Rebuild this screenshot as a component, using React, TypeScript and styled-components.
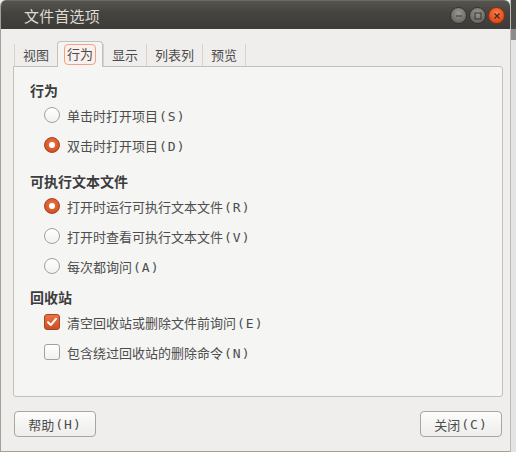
import React from "react";
import styled, { createGlobalStyle, css } from "styled-components";

const Global = createGlobalStyle`
  html, body { margin: 0; padding: 0; background: #ececec; }
  body { width: 516px; height: 452px; overflow: hidden; }
  * { box-sizing: border-box; }
`;

const FONT = `"DejaVu Sans Mono", "Noto Sans CJK SC", sans-serif`;

const Page = styled.div`
  display: flex;
  width: 516px;
  height: 452px;
`;

const Window = styled.div`
  width: 510px;
  height: 452px;
  display: flex;
  flex-direction: column;
  background: #efeeec;
  border-left: 1px solid #a59f95;
  border-bottom: 1px solid #a59f95;
  border-radius: 6px 6px 0 0;
  overflow: hidden;
  font-family: ${FONT};
`;

const Edge = styled.div`
  width: 6px;
  height: 452px;
  background:
    linear-gradient(to right, #bdbab4 0 1px, transparent 1px),
    linear-gradient(to bottom, #4a4945 0 29px, #8c8c8c 29px 40px, #e4e4e2 40px);
`;

const TitleBar = styled.div`
  height: 29px;
  flex: none;
  display: flex;
  align-items: center;
  padding: 0 5px 0 23px;
  background: linear-gradient(to bottom, #55544f 0%, #45443f 40%, #3c3b37 100%);
  border-top: 1px solid #6a6964;
`;

const Title = styled.div`
  flex: 1;
  color: #dfdbd2;
  font-size: 15px;
  font-family: "Noto Sans CJK SC", sans-serif;
  letter-spacing: 0.2px;
  margin-top: 1px;
`;

const WinButtons = styled.div`
  display: flex;
  gap: 2px;
  margin-top: 1px;
`;

const WinButton = styled.div<{ $kind: "min" | "max" | "close" }>`
  width: 17px;
  height: 17px;
  border-radius: 50%;
  display: flex;
  align-items: center;
  justify-content: center;
  border: 1px solid #34332f;
  ${(p) =>
    p.$kind === "close"
      ? css`
          background: radial-gradient(circle at 50% 35%, #f7814f 0%, #e9541f 55%, #c8401a 100%);
          border-color: #8a2e12;
        `
      : css`
          background: radial-gradient(circle at 50% 35%, #9a9892 0%, #76746f 55%, #5c5b56 100%);
        `}
`;

const Body = styled.div`
  flex: 1;
  display: flex;
  flex-direction: column;
  padding: 12px 7px 0 12px;
`;

const TabRow = styled.div`
  display: flex;
  align-items: flex-end;
  height: 25px;
  padding-left: 1px;
  position: relative;
  z-index: 1;
`;

const Tab = styled.div<{ $active?: boolean; $last?: boolean }>`
  font-size: 13px;
  color: #4c4c4c;
  display: flex;
  align-items: center;
  ${(p) =>
    p.$active
      ? css`
          height: 26px;
          margin-bottom: -1px;
          padding: 0 6px 1px 6px;
          background: #f5f5f4;
          border: 1px solid #c4c1bb;
          border-bottom: none;
          border-radius: 4px 4px 0 0;
        `
      : css`
          height: 22px;
          padding: 0 5px;
          border-left: 1px solid #d6d3ce;
          ${p.$last ? "border-right: 1px solid #d6d3ce;" : ""}
        `}
`;

const TabLabel = styled.span<{ $focus?: boolean }>`
  padding: 1px 2px;
  border: 1px solid transparent;
  border-radius: 4px;
  line-height: 17px;
  ${(p) =>
    p.$focus &&
    css`
      border-color: #efa383;
      background: #f8f1ee;
    `}
`;

const Panel = styled.div`
  height: 331px;
  flex: none;
  background: #f5f5f4;
  border: 1px solid #c4c1bb;
  border-radius: 0 3px 3px 3px;
  padding: 13px 16px 0 16px;
`;

const Section = styled.div<{ $gap?: number }>`
  margin-top: ${(p) => p.$gap ?? 0}px;
`;

const Heading = styled.div`
  height: 20px;
  line-height: 20px;
  font-size: 14px;
  font-weight: bold;
  color: #3c3c3c;
  font-family: "Noto Sans CJK SC", sans-serif;
`;

const Option = styled.div`
  height: 30px;
  display: flex;
  align-items: center;
  padding-left: 14px;
  gap: 7px;
  font-size: 13px;
  color: #4d4d4d;
`;

const Mnemonic = styled.span`
  letter-spacing: 1px;
  margin-left: 1px;
`;

const RadioDot = styled.span<{ $on?: boolean }>`
  width: 16px;
  height: 16px;
  flex: none;
  border-radius: 50%;
  display: flex;
  align-items: center;
  justify-content: center;
  ${(p) =>
    p.$on
      ? css`
          background: radial-gradient(circle at 50% 40%, #ea7a47 0%, #d9582a 60%, #bd4519 100%);
          border: 1px solid #a8431e;
          &::after {
            content: "";
            width: 6px;
            height: 6px;
            border-radius: 50%;
            background: #fff;
          }
        `
      : css`
          background: linear-gradient(to bottom, #ffffff, #f1f1f0);
          border: 1px solid #a3a19d;
        `}
`;

const CheckBox = styled.span<{ $on?: boolean }>`
  width: 16px;
  height: 16px;
  flex: none;
  border-radius: 3px;
  display: flex;
  align-items: center;
  justify-content: center;
  ${(p) =>
    p.$on
      ? css`
          background: linear-gradient(to bottom, #ea7445, #cd4e22);
          border: 1px solid #a8431e;
        `
      : css`
          background: linear-gradient(to bottom, #ffffff, #f1f1f0);
          border: 1px solid #a3a19d;
        `}
`;

const ButtonRow = styled.div`
  display: flex;
  justify-content: space-between;
  padding: 14px 1px 0 1px;
`;

const Button = styled.button`
  width: 82px;
  height: 26px;
  border: 1px solid #a9a6a0;
  border-radius: 4px;
  background: linear-gradient(to bottom, #fcfcfc, #eeedeb);
  font-family: ${FONT};
  font-size: 13px;
  color: #4c4c4c;
  padding: 0;
  display: flex;
  align-items: center;
  justify-content: center;
`;

function Radio({ on, label, key_ }: { on?: boolean; label: string; key_: string }) {
  return (
    <Option>
      <RadioDot $on={on} />
      <span>
        {label}
        <Mnemonic>({key_})</Mnemonic>
      </span>
    </Option>
  );
}

function Check({ on, label, key_ }: { on?: boolean; label: string; key_: string }) {
  return (
    <Option>
      <CheckBox $on={on}>
        {on && (
          <svg width="12" height="12" viewBox="0 0 12 12">
            <path d="M2 6.3 L4.8 9 L10 2.8" fill="none" stroke="#fff" strokeWidth="2" strokeLinecap="round" strokeLinejoin="round" />
          </svg>
        )}
      </CheckBox>
      <span>
        {label}
        <Mnemonic>({key_})</Mnemonic>
      </span>
    </Option>
  );
}

export default function App() {
  return (
    <Page>
      <Global />
      <Window>
        <TitleBar>
          <Title>文件首选项</Title>
          <WinButtons>
            <WinButton $kind="min">
              <svg width="8" height="8" viewBox="0 0 8 8">
                <path d="M1 4 H7" stroke="#3a3935" strokeWidth="1.2" />
              </svg>
            </WinButton>
            <WinButton $kind="max">
              <svg width="8" height="8" viewBox="0 0 8 8">
                <rect x="1" y="1" width="6" height="6" fill="none" stroke="#3a3935" strokeWidth="1.1" />
              </svg>
            </WinButton>
            <WinButton $kind="close">
              <svg width="8" height="8" viewBox="0 0 8 8">
                <path d="M1.5 1.5 L6.5 6.5 M6.5 1.5 L1.5 6.5" stroke="#3a2a22" strokeWidth="1.2" />
              </svg>
            </WinButton>
          </WinButtons>
        </TitleBar>
        <Body>
          <TabRow>
            <Tab><TabLabel>视图</TabLabel></Tab>
            <Tab $active><TabLabel $focus>行为</TabLabel></Tab>
            <Tab><TabLabel>显示</TabLabel></Tab>
            <Tab><TabLabel>列表列</TabLabel></Tab>
            <Tab $last><TabLabel>预览</TabLabel></Tab>
          </TabRow>
          <Panel>
            <Section>
              <Heading>行为</Heading>
              <Radio label="单击时打开项目" key_="S" />
              <Radio on label="双击时打开项目" key_="D" />
            </Section>
            <Section $gap={11}>
              <Heading>可执行文本文件</Heading>
              <Radio on label="打开时运行可执行文本文件" key_="R" />
              <Radio label="打开时查看可执行文本文件" key_="V" />
              <Radio label="每次都询问" key_="A" />
            </Section>
            <Section $gap={6}>
              <Heading>回收站</Heading>
              <Check on label="清空回收站或删除文件前询问" key_="E" />
              <Check label="包含绕过回收站的删除命令" key_="N" />
            </Section>
          </Panel>
          <ButtonRow>
            <Button>帮助<Mnemonic>(H)</Mnemonic></Button>
            <Button>关闭<Mnemonic>(C)</Mnemonic></Button>
          </ButtonRow>
        </Body>
      </Window>
      <Edge />
    </Page>
  );
}
